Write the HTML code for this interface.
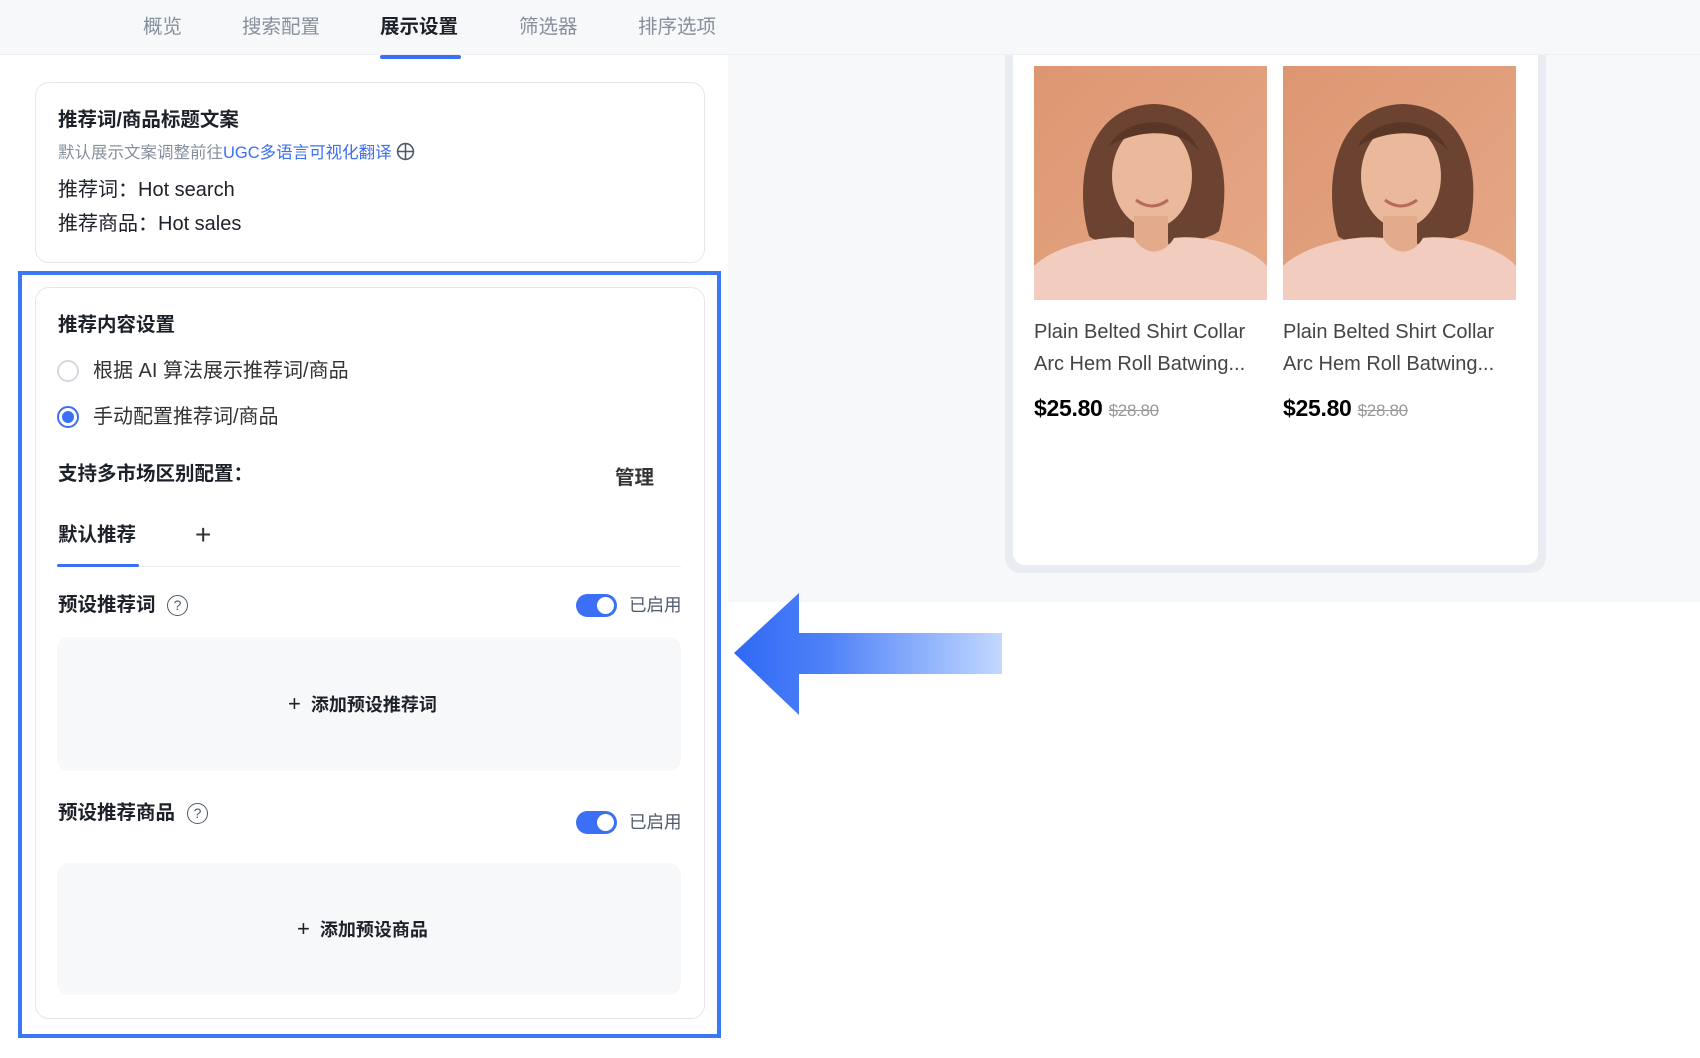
<!DOCTYPE html>
<html><head><meta charset="utf-8">
<style>
*{margin:0;padding:0;box-sizing:border-box}
body{width:1700px;height:1058px;position:relative;overflow:hidden;background:#fff;font-family:"Liberation Sans","Noto Sans CJK SC",sans-serif;color:#1d2129}
.a{position:absolute;white-space:nowrap}
.t{line-height:24px;height:24px}
.tab{font-size:19.5px;color:#86909c}
.b{font-weight:bold}
.tog{position:absolute;width:41px;height:23px;border-radius:12px;background:#3b6ff5}
.tog:after{content:"";position:absolute;right:3px;top:3px;width:17px;height:17px;border-radius:50%;background:#fff}
.q{position:absolute;width:21px;height:21px;border:1.6px solid #4e5969;border-radius:50%;font-size:14px;line-height:18px;text-align:center;color:#4e5969}
.gbox{position:absolute;left:57px;width:624px;background:#f7f8fa;border-radius:12px}
</style></head><body>
<!-- right gray area -->
<div class="a" style="left:728px;top:55px;width:972px;height:547px;background:#f7f8fa"></div>
<!-- phone card -->
<div class="a" style="left:1005px;top:55px;width:541px;height:518px;background:#e9edf2;border-radius:0 0 16px 16px"></div>
<div class="a" style="left:1013px;top:55px;width:525px;height:510px;background:#fff;border-radius:0 0 12px 12px"></div>
<!-- header band -->
<div class="a" style="left:0;top:0;width:1700px;height:55px;background:#f7f8fa;border-bottom:1px solid #eef0f3"></div>
<div class="a tab t" style="left:143px;top:15px">概览</div>
<div class="a tab t" style="left:242px;top:15px">搜索配置</div>
<div class="a tab t b" style="left:380px;top:15px;color:#1d2129">展示设置</div>
<div class="a tab t" style="left:519px;top:15px">筛选器</div>
<div class="a tab t" style="left:638px;top:15px">排序选项</div>
<div class="a" style="left:380px;top:55px;width:81px;height:4px;background:#3b6ff5;border-radius:2px"></div>

<svg class="a" style="left:1034px;top:66px" width="233" height="234" viewBox="0 0 233 234">
<defs><linearGradient id="bg" x1="0" y1="0" x2="1" y2="1"><stop offset="0" stop-color="#dd9672"/><stop offset="1" stop-color="#e6a887"/></linearGradient></defs>
<rect width="233" height="234" fill="url(#bg)"/>
<path d="M55 170 C40 120 50 40 120 38 C185 40 200 110 185 165 C170 180 70 185 55 170Z" fill="#6b4330"/>
<ellipse cx="118" cy="110" rx="40" ry="52" fill="#eab89a"/>
<path d="M75 80 C90 50 150 45 165 85 C150 65 110 60 75 80Z" fill="#5a3626"/>
<rect x="100" y="150" width="34" height="35" fill="#e3ab8c"/>
<path d="M0 234 L0 200 C20 180 70 168 100 172 C110 190 130 190 140 172 C170 168 215 180 233 200 L233 234Z" fill="#f2cdbf"/>
<path d="M102 134 Q118 146 134 134" stroke="#b86a5a" stroke-width="3" fill="none"/>
</svg>
<svg class="a" style="left:1283px;top:66px" width="233" height="234" viewBox="0 0 233 234">
<rect width="233" height="234" fill="url(#bg)"/>
<path d="M55 170 C40 120 50 40 120 38 C185 40 200 110 185 165 C170 180 70 185 55 170Z" fill="#6b4330"/>
<ellipse cx="118" cy="110" rx="40" ry="52" fill="#eab89a"/>
<path d="M75 80 C90 50 150 45 165 85 C150 65 110 60 75 80Z" fill="#5a3626"/>
<rect x="100" y="150" width="34" height="35" fill="#e3ab8c"/>
<path d="M0 234 L0 200 C20 180 70 168 100 172 C110 190 130 190 140 172 C170 168 215 180 233 200 L233 234Z" fill="#f2cdbf"/>
<path d="M102 134 Q118 146 134 134" stroke="#b86a5a" stroke-width="3" fill="none"/>
</svg>
<div class="a" style="left:1034px;top:316px;font-size:20px;line-height:32px;color:#444">Plain Belted Shirt Collar<br>Arc Hem Roll Batwing...</div>
<div class="a" style="left:1283px;top:316px;font-size:20px;line-height:32px;color:#444">Plain Belted Shirt Collar<br>Arc Hem Roll Batwing...</div>
<div class="a" style="left:1034px;top:395px;font-size:23px;line-height:26px;color:#000;font-weight:bold;letter-spacing:-0.3px">$25.80 <span style="font-size:17px;color:#999;font-weight:normal;text-decoration:line-through">$28.80</span></div>
<div class="a" style="left:1283px;top:395px;font-size:23px;line-height:26px;color:#000;font-weight:bold;letter-spacing:-0.3px">$25.80 <span style="font-size:17px;color:#999;font-weight:normal;text-decoration:line-through">$28.80</span></div>

<!-- card 1 -->
<div class="a" style="left:35px;top:82px;width:670px;height:181px;border:1.5px solid #e5e6eb;border-radius:14px"></div>
<div class="a t b" style="left:58px;top:108px;font-size:19.5px">推荐词/商品标题文案</div>
<div class="a" style="left:58px;top:142px;font-size:16.5px;line-height:20px;color:#86909c">默认展示文案调整前往<span style="color:#3b6ff5">UGC多语言可视化翻译</span> <svg width="19" height="19" viewBox="0 0 18 18" style="vertical-align:-3px"><circle cx="9" cy="9" r="7.5" fill="none" stroke="#4e5969" stroke-width="1.5"/><path d="M1.5 9H16.5M9 1.5V16.5" stroke="#4e5969" stroke-width="1.5"/></svg></div>
<div class="a t" style="left:58px;top:178px;font-size:20px">推荐词：Hot search</div>
<div class="a t" style="left:58px;top:212px;font-size:20px">推荐商品：Hot sales</div>

<!-- highlight -->
<div class="a" style="left:18px;top:271px;width:703px;height:767px;border:4px solid #3b78f5"></div>
<div class="a" style="left:35px;top:287px;width:670px;height:732px;border:1.5px solid #e5e6eb;border-radius:14px"></div>
<div class="a t b" style="left:58px;top:313px;font-size:19.5px">推荐内容设置</div>
<div class="a" style="left:57px;top:360px;width:22px;height:22px;border:2px solid #d5d8de;border-radius:50%"></div>
<div class="a t" style="left:93px;top:359px;font-size:20px;color:#333">根据 AI 算法展示推荐词/商品</div>
<div class="a" style="left:57px;top:406px;width:22px;height:22px;border:2px solid #3b6ff5;border-radius:50%"></div>
<div class="a" style="left:62px;top:411px;width:12px;height:12px;background:#3b6ff5;border-radius:50%"></div>
<div class="a t" style="left:93px;top:405px;font-size:20px;color:#333">手动配置推荐词/商品</div>
<div class="a t b" style="left:58px;top:462px;font-size:19.5px">支持多市场区别配置：</div>
<div class="a t b" style="left:615px;top:466px;font-size:19.5px;color:#333">管理</div>
<div class="a t b" style="left:58px;top:523px;font-size:19.5px">默认推荐</div>
<div class="a" style="left:195px;top:519px;font-size:28px;line-height:32px;color:#333;font-weight:300">+</div>
<div class="a" style="left:57px;top:566px;width:624px;height:1px;background:#eceef2"></div>
<div class="a" style="left:57px;top:564px;width:82px;height:3px;background:#3b6ff5;border-radius:2px"></div>

<div class="a t b" style="left:58px;top:593px;font-size:19.5px">预设推荐词</div>
<div class="q" style="left:167px;top:595px">?</div>
<div class="tog" style="left:576px;top:594px"></div>
<div class="a t" style="left:629px;top:593px;font-size:17.5px;color:#4e5969">已启用</div>
<div class="gbox" style="top:637px;height:134px"></div>
<div class="a t b" style="left:288px;top:692px;font-size:18px;color:#1d2129"><span style="font-weight:normal;font-size:22px;margin-right:10px">+</span>添加预设推荐词</div>

<div class="a t b" style="left:58px;top:801px;font-size:19.5px">预设推荐商品</div>
<div class="q" style="left:187px;top:803px">?</div>
<div class="tog" style="left:576px;top:811px"></div>
<div class="a t" style="left:629px;top:810px;font-size:17.5px;color:#4e5969">已启用</div>
<div class="gbox" style="top:863px;height:132px"></div>
<div class="a t b" style="left:297px;top:917px;font-size:18px;color:#1d2129"><span style="font-weight:normal;font-size:22px;margin-right:10px">+</span>添加预设商品</div>

<!-- arrow -->
<svg class="a" style="left:730px;top:588px" width="280" height="132" viewBox="0 0 280 132">
<defs><linearGradient id="ar" x1="0" x2="1"><stop offset="0" stop-color="#2f68f5"/><stop offset="0.35" stop-color="#4f82f7"/><stop offset="1" stop-color="#c2d8ff"/></linearGradient></defs>
<path d="M4 65 L69 5 L69 45 L272 45 L272 86 L69 86 L69 127 Z" fill="url(#ar)"/>
</svg>
</body></html>
